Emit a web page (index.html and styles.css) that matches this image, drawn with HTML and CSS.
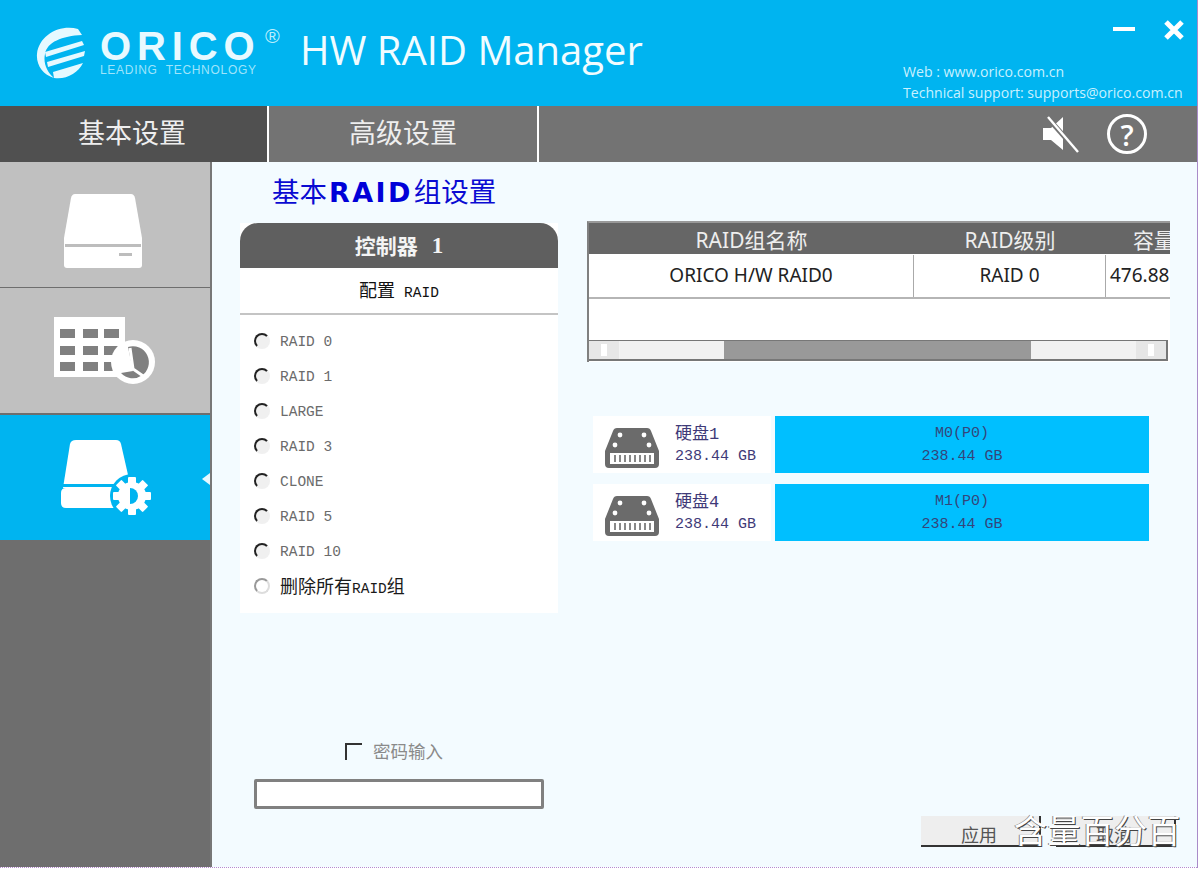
FILE: index.html
```html
<!DOCTYPE html>
<html lang="zh">
<head>
<meta charset="utf-8">
<title>ORICO HW RAID Manager</title>
<link rel="stylesheet" href="styles.css">
</head>
<body>
<div class="app">
  <header class="header">
    <div class="logo">
      <svg class="logo-mark" width="50" height="52" viewBox="0 0 50 52">
        <path class="mark-fill" d="M42 2C24-3 3 8 1 27c-1 11 6 21 17 24-7-6-11-15-9-24C11 15 26 9 46 8z"/>
        <path class="mark-fill" d="M9 25l37-11 2 4-38 12zM11 35l38-11-1 5-36 11zM17 45l30-9c-5 10-17 17-29 15z"/>
      </svg>
      <div class="wordmark">
        <span class="orico">ORICO</span>
        <span class="leading">LEADING&nbsp;&nbsp;TECHNOLOGY</span>
      </div>
      <span class="reg">®</span>
      <h1 class="app-title">HW RAID Manager</h1>
    </div>
    <div class="header-right">
      <div class="win-buttons">
        <svg width="22" height="6" viewBox="0 0 22 6"><rect y="1" width="22" height="4" fill="#fff"/></svg>
        <svg width="22" height="22" viewBox="0 0 22 22"><path d="M3 3l16 16M19 3L3 19" stroke="#fff" stroke-width="5"/></svg>
      </div>
      <p class="contact">Web : www.orico.com.cn</p>
      <p class="contact">Technical support: supports@orico.com.cn</p>
    </div>
  </header>

  <nav class="nav">
    <div class="tab tab-active">基本设置</div>
    <div class="tab">高级设置</div>
    <div class="nav-icons">
      <svg width="38" height="38" viewBox="0 0 38 38">
        <path d="M1 13h8l12-11v33L9 25H1z" fill="#fff"/>
        <path d="M5 2l31 35" stroke="#737373" stroke-width="5"/>
        <path d="M6 2l30 35" stroke="#fff" stroke-width="2.4"/>
      </svg>
      <span class="help">?</span>
    </div>
  </nav>

  <div class="body">
    <aside class="sidebar">
      <div class="side-item side-disk">
        <svg width="80" height="76" viewBox="0 0 80 76">
          <path d="M12 1h56q3 0 4 4l7 40v27q0 3-3 3H4q-3 0-3-3V45L8 5q1-4 4-4z" fill="#fff"/>
          <rect x="2" y="51" width="76" height="3" fill="#bdbdbd"/>
          <rect x="56" y="60" width="13" height="3" fill="#bdbdbd"/>
        </svg>
      </div>
      <div class="side-item side-table">
        <svg width="102" height="72" viewBox="0 0 102 72">
          <rect x="0" y="2" width="71" height="60" fill="#fff"/>
          <g fill="#808080">
            <rect x="6" y="14" width="15" height="9"/><rect x="29" y="14" width="15" height="9"/><rect x="50" y="14" width="15" height="9"/>
            <rect x="6" y="31" width="15" height="9"/><rect x="29" y="31" width="15" height="9"/><rect x="50" y="31" width="15" height="9"/>
            <rect x="6" y="47" width="15" height="9"/><rect x="29" y="47" width="15" height="9"/><rect x="50" y="47" width="15" height="9"/>
          </g>
          <circle cx="79" cy="47" r="22" fill="#fff"/>
          <path d="M74 32A16 16 0 1 1 67 58L79 56z" fill="#808080"/>
          <path d="M76 33l3 21 13 9" fill="none" stroke="#fff" stroke-width="3"/>
        </svg>
      </div>
      <div class="side-item side-active">
        <svg width="94" height="82" viewBox="0 0 94 82">
          <path d="M16 2h40q4 0 5 4l10 44H3L10 6q1-4 6-4z" fill="#fff"/>
          <path d="M6 50h60q5 0 5 5v10q0 5-5 5H6q-5 0-5-5V55q0-5 5-5z" fill="#fff"/>
          <rect x="3" y="46" width="52" height="3" fill="#00b4f0"/>
          <circle cx="72" cy="58" r="22" fill="#00b4f0"/>
          <g fill="#fff">
            <circle cx="72" cy="58" r="14"/>
            <rect x="68" y="39" width="8" height="38" rx="1"/>
            <rect x="68" y="39" width="8" height="38" rx="1" transform="rotate(45 72 58)"/>
            <rect x="68" y="39" width="8" height="38" rx="1" transform="rotate(90 72 58)"/>
            <rect x="68" y="39" width="8" height="38" rx="1" transform="rotate(135 72 58)"/>
          </g>
          <path d="M70 50a8 8 0 0 1 0 16z" fill="#00b4f0"/>
        </svg>
        <span class="side-arrow"></span>
      </div>
    </aside>

    <main class="main">
      <h2 class="page-title">基本<b>RAID</b>组设置</h2>
      <div class="columns">
        <section class="left">
          <div class="panel">
            <div class="panel-head">控制器 <b>1</b></div>
            <div class="panel-sub"><span class="cjk-lg">配置</span> RAID</div>
            <ul class="radios">
              <li class="radio-row"><span class="radio"></span>RAID 0</li>
              <li class="radio-row"><span class="radio"></span>RAID 1</li>
              <li class="radio-row"><span class="radio"></span>LARGE</li>
              <li class="radio-row"><span class="radio"></span>RAID 3</li>
              <li class="radio-row"><span class="radio"></span>CLONE</li>
              <li class="radio-row"><span class="radio"></span>RAID 5</li>
              <li class="radio-row"><span class="radio"></span>RAID 10</li>
              <li class="radio-row radio-strong"><span class="radio radio-light"></span><span class="mixed">删除所有<span class="mono">RAID</span>组</span></li>
            </ul>
          </div>
          <div class="password">
            <div class="pw-label"><span class="checkbox"></span>密码输入</div>
            <div class="pw-input"></div>
          </div>
        </section>

        <section class="right">
          <div class="table-wrap">
            <div class="t-head">
              <div class="c1">RAID组名称</div><div class="c2">RAID级别</div><div class="c3">容量</div>
            </div>
            <div class="t-row">
              <div class="c1">ORICO H/W RAID0</div><div class="c2">RAID 0</div><div class="c3">476.88</div>
            </div>
            <div class="t-empty"></div>
            <div class="scrollbar">
              <span class="sb-end"><i></i></span>
              <span class="sb-track sb-t1"></span>
              <span class="sb-thumb"></span>
              <span class="sb-track sb-t2"></span>
              <span class="sb-end"><i></i></span>
            </div>
          </div>

          <div class="drives">
            <div class="drive">
              <div class="drive-info">
                <svg class="hdd" width="56" height="42" viewBox="0 0 56 42">
                  <path d="M13 1h30q3 0 4 3l8 20v13q0 4-4 4H5q-4 0-4-4V24L9 4q1-3 4-3z" fill="#6b6b6b"/>
                  <g fill="#fff"><circle cx="16" cy="8" r="2.4"/><circle cx="40" cy="8" r="2.4"/><circle cx="11" cy="18" r="2.4"/><circle cx="45" cy="18" r="2.4"/></g>
                  <rect x="6" y="26" width="44" height="11" fill="#fff"/>
                  <path d="M11 28v7M16 28v7M21 28v7M26 28v7M31 28v7M36 28v7M41 28v7M46 28v7" stroke="#6b6b6b" stroke-width="1.6"/>
                </svg>
                <div class="drive-text"><div>硬盘1</div><div>238.44 GB</div></div>
              </div>
              <div class="drive-bar"><div>M0(P0)</div><div>238.44 GB</div></div>
            </div>
            <div class="drive">
              <div class="drive-info">
                <svg class="hdd" width="56" height="42" viewBox="0 0 56 42">
                  <path d="M13 1h30q3 0 4 3l8 20v13q0 4-4 4H5q-4 0-4-4V24L9 4q1-3 4-3z" fill="#6b6b6b"/>
                  <g fill="#fff"><circle cx="16" cy="8" r="2.4"/><circle cx="40" cy="8" r="2.4"/><circle cx="11" cy="18" r="2.4"/><circle cx="45" cy="18" r="2.4"/></g>
                  <rect x="6" y="26" width="44" height="11" fill="#fff"/>
                  <path d="M11 28v7M16 28v7M21 28v7M26 28v7M31 28v7M36 28v7M41 28v7M46 28v7" stroke="#6b6b6b" stroke-width="1.6"/>
                </svg>
                <div class="drive-text"><div>硬盘4</div><div>238.44 GB</div></div>
              </div>
              <div class="drive-bar"><div>M1(P0)</div><div>238.44 GB</div></div>
            </div>
          </div>

          <div class="actions">
            <button class="btn">应用</button>
            <button class="btn">取消</button>
            <span class="watermark">含量百分百</span>
          </div>
        </section>
      </div>
    </main>
  </div>
</div>
</body>
</html>
```
FILE: styles.css
```css
* { box-sizing: border-box; }
html, body { margin: 0; padding: 0; height: 100%; background: #fff; overflow: hidden; }
body { font-family: "Noto Sans", "Noto Sans CJK SC", sans-serif; }
ul { list-style: none; margin: 0; padding: 0; }
h1, h2, p { margin: 0; font-weight: normal; }

.app {
  width: 1197px;
  height: 868px;
  display: flex;
  flex-direction: column;
  border-bottom: 1px dotted #b58ad0;
  box-shadow: 1px 0 0 #a98bc9;
}

/* header */
.header {
  height: 106px;
  flex: none;
  background: #00b4f0;
  display: flex;
  justify-content: space-between;
  color: #fff;
}
.logo { display: flex; align-items: flex-start; padding: 27px 0 0 36px; }
.logo-mark { flex: none; }
.mark-fill { fill: #e6f9ff; }
.wordmark { display: flex; flex-direction: column; margin-left: 14px; width: 162px; white-space: nowrap; }
.orico {
  font: bold 40px/34px "Liberation Sans", sans-serif;
  letter-spacing: 5.9px;
  color: #e8f9ff;
  height: 36px;
  padding-top: 2px;
}
.leading {
  font: 12px/12px "Liberation Sans", sans-serif;
  color: #9fe4fb;
  letter-spacing: .7px;
  padding-top: 1px;
}
.reg { font: 20px/20px "Liberation Sans", sans-serif; color: #bdeefc; margin: -1px 0 0 3px; width: 35px; flex: none; }
.app-title {
  font: 40px/46px "Open Sans", sans-serif;
  color: #f1fcff;
  white-space: nowrap;
}
.header-right { width: 296px; padding-top: 19px; padding-left: 2px; }
.win-buttons { display: flex; align-items: center; justify-content: flex-end; gap: 28px; height: 22px; padding-right: 12px; margin-bottom: 20px; }
.win-buttons svg:first-child { margin-top: -2px; }
.contact { font: 14.1px/21px "Open Sans", sans-serif; color: #c9f1ff; white-space: nowrap; }

/* nav */
.nav {
  height: 56px;
  flex: none;
  background: #737373;
  display: flex;
  color: #eee;
  font: 27px/1 "Noto Sans CJK SC", sans-serif;
}
.tab {
  width: 270px;
  display: flex;
  align-items: center;
  justify-content: center;
  border-right: 2px solid #fff;
  padding-bottom: 5px;
}
.tab-active { width: 269px; background: #505050; padding-right: 3px; }
.nav-icons { margin-left: auto; display: flex; align-items: center; gap: 27px; padding-right: 50px; }
.help {
  width: 40px;
  height: 40px;
  border: 3.5px solid #fff;
  border-radius: 50%;
  display: flex;
  align-items: center;
  justify-content: center;
  font: 600 29px/1 "Open Sans", sans-serif;
  color: #fff;
}

/* body */
.body { flex: 1; display: flex; min-height: 0; }
.sidebar {
  width: 212px;
  flex: none;
  background: #6e6e6e;
  border-right: 2px solid #777;
  display: flex;
  flex-direction: column;
}
.side-item {
  height: 125px;
  margin-bottom: 1px;
  background: #c0c0c0;
  display: flex;
  align-items: center;
  justify-content: center;
  position: relative;
  flex: none;
}
.side-disk { padding: 12px 4px 0 0; }
.side-table { margin-bottom: 2px; }
.side-active { background: #00b4f0; margin: 0; padding: 2px 0 0 4px; }
.side-arrow {
  position: absolute;
  right: 0;
  top: 58px;
  border: 6px solid transparent;
  border-right: 8px solid #e6f8ff;
  border-left: 0;
}

/* main */
.main { flex: 1; background: #f3fbff; display: flex; flex-direction: column; padding: 11px 21px 20px 28px; min-width: 0; }
.page-title {
  font: 27.5px/34px "Noto Sans CJK SC", serif;
  color: #0a0ad2;
  padding-left: 32px;
  height: 50px;
  white-space: nowrap;
}
.page-title b { font: bold 27px/34px "DejaVu Sans", sans-serif; letter-spacing: 2.4px; padding: 0 1px 0 2px; color: #0000d8; }
.columns { flex: 1; display: flex; min-height: 0; }
.left { width: 318px; flex: none; display: flex; flex-direction: column; }
.panel { height: 390px; background: #fff; }
.panel-head {
  height: 45px;
  background: #5f5f5f;
  border-radius: 18px 18px 0 0;
  color: #f4f4f4;
  display: flex;
  align-items: center;
  justify-content: center;
  gap: 14px;
  font: bold 21px/1 "Noto Sans CJK SC", sans-serif;
}
.panel-head b { font: bold 23px "Liberation Serif", serif; }
.panel-sub {
  height: 47px;
  padding-top: 12px;
  border-bottom: 2px solid #c4c4c4;
  display: flex;
  align-items: baseline;
  justify-content: center;
  gap: 9px;
  font: 14.5px/1 "Liberation Mono", "Noto Sans CJK SC", monospace;
  color: #111;
}
.cjk-lg { font: 18px/1 "Noto Sans CJK SC", sans-serif; }
.radios { padding: 10px 0 0 14px; }
.radio-row {
  height: 35px;
  display: flex;
  align-items: center;
  gap: 10px;
  font: 14.5px/1 "Liberation Mono", "Noto Sans CJK SC", monospace;
  color: #6b6b6b;
}
.radio-strong { color: #1a1a1a; }
.mixed { font: 18px/1 "Noto Sans CJK SC", sans-serif; white-space: nowrap; margin-top: -2px; }
.mono { font: 14.5px/1 "Liberation Mono", monospace; }
.radio {
  width: 16px;
  height: 16px;
  border-radius: 50%;
  background: #f0f0f0;
  border: 2px solid transparent;
  border-top-color: #222;
  border-left-color: #222;
  margin-top: -4px;
  flex: none;
}
.radio-light { border-top-color: #999; border-left-color: #999; border-right-color: #ddd; border-bottom-color: #ddd; background: #fff; }

.password { margin-top: 126px; padding-left: 14px; }
.pw-label { display: flex; align-items: center; justify-content: center; gap: 11px; height: 24px; width: 280px; color: #8a8a8a; font: 17.5px/1 "Noto Sans CJK SC", sans-serif; }
.checkbox { width: 17px; height: 17px; border-top: 2px solid #333; border-left: 2px solid #333; flex: none; }
.pw-input { width: 290px; height: 30px; margin-top: 16px; background: #fff; border: 3px solid #808080; border-radius: 2px; }

/* right column */
.right { flex: 1; display: flex; flex-direction: column; margin-left: 29px; min-width: 0; }
.table-wrap { width: 583px; height: 141px; background: #fff; border-left: 2px solid #808080; border-top: 2px solid #999; overflow: hidden; flex: none; margin-top: -2px; }
.t-head, .t-row { display: flex; white-space: nowrap; }
.t-head { height: 31px; background: #666; color: #eee; font: 21px/34px "Noto Sans", "Noto Sans CJK SC", sans-serif; }
.t-row { height: 45px; border-top: 1px solid #fff; border-bottom: 2px solid #b5b5b5; color: #222; font: 19px/41px "Noto Sans", sans-serif; }
.c1 { width: 325px; text-align: center; flex: none; }
.c2 { width: 192px; text-align: center; flex: none; }
.c3 { width: 65px; padding-left: 4px; flex: none; overflow: hidden; }
.t-head .c3 { padding-left: 27px; }
.t-row .c1, .t-row .c2 { border-right: 1px solid #aaa; }
.t-empty { height: 41px; }
.scrollbar { display: flex; width: 579px; height: 21px; background: #eee; border: 2px solid #777; border-top: 1px solid #777; border-left: 0; }
.sb-end { width: 30px; background: #e6e6e6; display: flex; align-items: center; justify-content: center; flex: none; }
.sb-end i { width: 6px; height: 12px; background: #fff; }
.sb-track { background: #f2f2f2; flex: none; }
.sb-t1 { width: 105px; }
.sb-thumb { width: 307px; background: #999; flex: none; }
.sb-t2 { width: 105px; }

.drives { margin: 54px 0 0 6px; display: flex; flex-direction: column; gap: 11px; }
.drive { display: flex; height: 57px; gap: 4px; }
.drive-info { width: 178px; background: #fff; display: flex; align-items: center; padding-left: 11px; gap: 15px; }
.hdd { flex: none; margin-top: 6px; }
.drive-text { font: 15px/22px "Liberation Mono", "Noto Sans CJK SC", monospace; color: #3f3a78; white-space: nowrap; padding-top: 2px; }
.drive-text div:first-child { font-size: 17px; }
.drive-bar { width: 374px; background: #00bfff; text-align: center; font: 15px/23px "Liberation Mono", monospace; color: #34457a; padding-top: 6px; }

.actions { margin-top: auto; display: flex; justify-content: flex-end; gap: 15px; position: relative; }
.btn {
  width: 120px;
  height: 31px;
  background: #eee;
  border: 0;
  border-bottom: 2px solid #333;
  border-right: 2px solid #333;
  font: 18px/31px "Noto Sans CJK SC", sans-serif;
  color: #555;
  padding: 3px 2px 0 0;
  text-align: center;
}
.watermark {
  position: absolute;
  right: -5px;
  top: -7px;
  font: 33px/40px "Noto Sans CJK SC", sans-serif;
  color: #fff;
  letter-spacing: .4px;
  text-shadow: 1px 1px 0 #444, -1px 0 0 #888;
  white-space: nowrap;
}
```
